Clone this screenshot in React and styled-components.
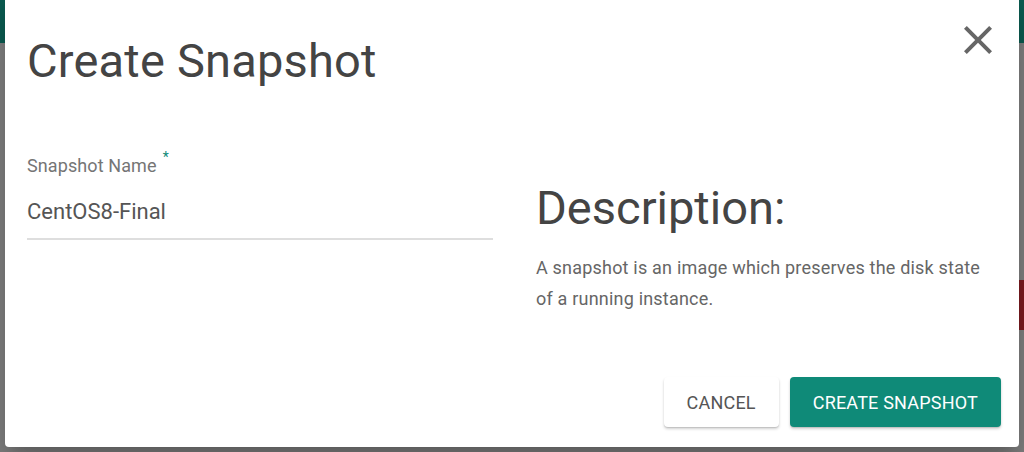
import React, { useState } from 'react';
import styled, { createGlobalStyle } from 'styled-components';

const GlobalStyle = createGlobalStyle`
  html, body {
    margin: 0;
    padding: 0;
    width: 100%;
    height: 100%;
    overflow: hidden;
    background: #7e7e7e;
    font-family: Roboto, 'Liberation Sans', sans-serif;
  }
`;

const Backdrop = styled.div`
  position: relative;
  width: 1024px;
  height: 452px;
  background: #7e7e7e;
  overflow: hidden;
`;

const AppBar = styled.div`
  height: 43px;
  background: #0b5a4f;
`;

const Stripe = styled.div`
  position: absolute;
  right: 0;
  top: 280px;
  width: 6px;
  height: 50px;
  background: #7a1a1f;
`;

const Dialog = styled.div`
  position: absolute;
  left: 5px;
  top: -4px;
  width: 1014px;
  height: 451px;
  box-sizing: border-box;
  background: #fff;
  border-radius: 4px;
  box-shadow: 0 11px 15px -7px rgba(0, 0, 0, 0.2), 0 24px 38px 3px rgba(0, 0, 0, 0.14);
  padding: 0 18px 0 22px;
  display: flex;
  flex-direction: column;
`;

const Header = styled.div`
  display: flex;
  justify-content: space-between;
  align-items: flex-start;
`;

const Title = styled.h1`
  margin: 35px 0 0;
  font-size: 47px;
  line-height: 60px;
  font-weight: 400;
  color: #444;
  letter-spacing: 0.2px;
`;

const CloseButton = styled.button`
  margin: 20px -1px 0 0;
  width: 48px;
  height: 48px;
  padding: 0;
  border: 0;
  background: transparent;
  cursor: pointer;
  display: flex;
  align-items: center;
  justify-content: center;
  color: #666;
`;

const Body = styled.div`
  display: grid;
  grid-template-columns: 466px 1fr;
  column-gap: 43px;
  margin-top: 58px;
`;

const Field = styled.label`
  display: flex;
  flex-direction: column;
`;

const Label = styled.span`
  font-size: 18px;
  line-height: 22px;
  color: #757575;
  letter-spacing: 0.1px;
`;

const Required = styled.sup`
  color: #0f8a78;
  font-size: 14px;
  margin-left: 6px;
  position: relative;
  top: -3px;
`;

const Input = styled.input`
  margin-top: 21px;
  border: 0;
  border-bottom: 2px solid #dedede;
  outline: none;
  padding: 0 0 12px;
  font-family: inherit;
  font-size: 22px;
  line-height: 28px;
  color: #555;
  background: transparent;
`;

const Info = styled.div`
  padding-top: 31px;
`;

const InfoTitle = styled.h2`
  margin: 0;
  font-size: 47px;
  line-height: 56px;
  font-weight: 400;
  color: #444;
`;

const InfoText = styled.p`
  margin: 16px 0 0;
  font-size: 18px;
  line-height: 31px;
  color: #666;
  letter-spacing: 0.2px;
  max-width: 462px;
`;

const Actions = styled.div`
  margin-top: auto;
  margin-bottom: 20px;
  display: flex;
  justify-content: flex-end;
  gap: 11px;
`;

const Button = styled.button`
  height: 50px;
  padding: 0 23px;
  border: 0;
  border-radius: 4px;
  font-family: inherit;
  font-size: 18px;
  letter-spacing: 0.2px;
  text-transform: uppercase;
  cursor: pointer;
  background: ${(p) => (p.$primary ? '#0f8a78' : '#fff')};
  color: ${(p) => (p.$primary ? '#fff' : '#555')};
  box-shadow: 0 2px 3px rgba(0, 0, 0, 0.18), 0 1px 1px rgba(0, 0, 0, 0.1);
`;

const CloseIcon = () => (
  <svg width="48" height="48" viewBox="0 0 24 24" fill="currentColor">
    <path d="M19 6.41L17.59 5 12 10.59 6.41 5 5 6.41 10.59 12 5 17.59 6.41 19 12 13.41 17.59 19 19 17.59 13.41 12z" />
  </svg>
);

const App = () => {
  const [name, setName] = useState('CentOS8-Final');

  return (
    <>
      <GlobalStyle />
      <Backdrop>
        <AppBar />
        <Stripe />
        <Dialog>
          <Header>
            <Title>Create Snapshot</Title>
            <CloseButton aria-label="Close">
              <CloseIcon />
            </CloseButton>
          </Header>
          <Body>
            <Field>
              <Label>
                Snapshot Name<Required>*</Required>
              </Label>
              <Input value={name} onChange={(e) => setName(e.target.value)} />
            </Field>
            <Info>
              <InfoTitle>Description:</InfoTitle>
              <InfoText>
                A snapshot is an image which preserves the disk state of a running instance.
              </InfoText>
            </Info>
          </Body>
          <Actions>
            <Button>Cancel</Button>
            <Button $primary>Create Snapshot</Button>
          </Actions>
        </Dialog>
      </Backdrop>
    </>
  );
};

export default App;
